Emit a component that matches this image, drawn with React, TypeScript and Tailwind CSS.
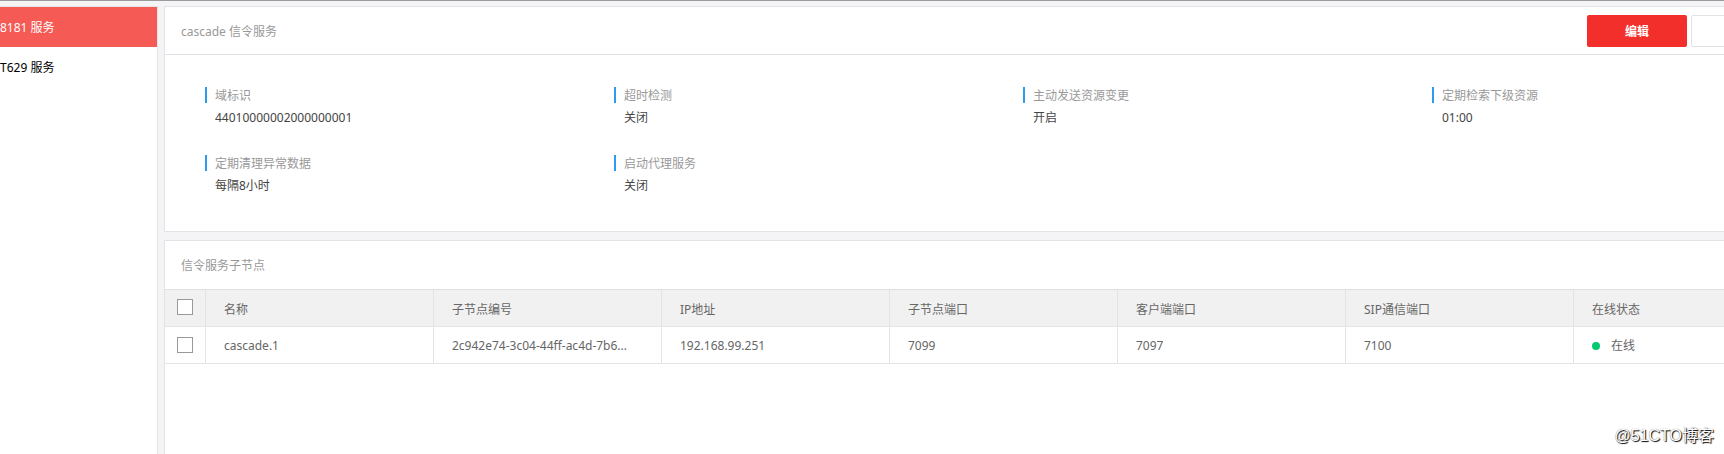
const services = ["8181 服务", "T629 服务"];

const details = [
  { label: "域标识", value: "44010000002000000001" },
  { label: "超时检测", value: "关闭" },
  { label: "主动发送资源变更", value: "开启" },
  { label: "定期检索下级资源", value: "01:00" },
  { label: "定期清理异常数据", value: "每隔8小时" },
  { label: "启动代理服务", value: "关闭" },
];

const columns = ["名称", "子节点编号", "IP地址", "子节点端口", "客户端端口", "SIP通信端口", "在线状态"];

const nodes = [
  {
    cells: ["cascade.1", "2c942e74-3c04-44ff-ac4d-7b6...", "192.168.99.251", "7099", "7097", "7100"],
    status: "在线",
  },
];

function Sidebar() {
  return (
    <nav className="mt-[5px] w-[158px] shrink-0 border-r border-t border-[#e4e5e8] bg-white">
      {services.map((name, i) => (
        <a
          key={name}
          href="#"
          className={
            i === 0
              ? "flex h-10 items-center bg-[#f55a55] pt-[2px] text-white"
              : "flex h-10 items-center pt-[2px] text-black"
          }
        >
          {name}
        </a>
      ))}
    </nav>
  );
}

function Tick({ label }: { label: string }) {
  return (
    <input
      type="checkbox"
      aria-label={label}
      className="mx-auto block size-4 appearance-none border border-[#999999] bg-white checked:bg-[#f32f2c]"
    />
  );
}

function Details() {
  return (
    <section className="border border-[#e2e3e6] bg-white">
      <header className="flex h-12 items-center border-b border-[#e2e3e6] pl-4 pr-[50px]">
        <h1 className="flex-1 pt-[2px] text-[#999999]">cascade 信令服务</h1>
        <div className="flex gap-1">
          <button type="button" className="h-8 w-[100px] rounded-xs bg-[#f32f2c] pt-[2px] font-bold text-white">
            编辑
          </button>
          <button
            type="button"
            aria-label="更多操作"
            className="h-8 w-[100px] rounded-xs border border-[#e2e3e6] bg-white"
          />
        </div>
      </header>
      <dl className="grid grid-cols-4 gap-y-6 pb-[35px] pl-10 pt-[29px]">
        {details.map((d) => (
          <div key={d.label}>
            <dt className="flex h-[22px] items-center gap-2 text-[#999999]">
              <span className="h-4 w-[2px] bg-[#2d9cee]" />
              <span className="pt-[2px]">{d.label}</span>
            </dt>
            <dd className="h-[22px] pl-[10px] leading-6 text-[#444444]">{d.value}</dd>
          </div>
        ))}
      </dl>
    </section>
  );
}

function Nodes() {
  return (
    <section className="flex-1 border border-b-0 border-[#e2e3e6] bg-white">
      <h2 className="flex h-12 items-center pl-4 pt-[2px] text-[#999999]">信令服务子节点</h2>
      <table className="w-full table-fixed border-separate border-spacing-0 border-t border-[#dfdfe1] text-left text-[#666666]">
        <colgroup>
          <col className="w-[41px]" />
          <col className="w-[228px]" />
          <col className="w-[228px]" />
          <col className="w-[228px]" />
          <col className="w-[228px]" />
          <col className="w-[228px]" />
          <col className="w-[228px]" />
          <col />
        </colgroup>
        <thead>
          <tr className="h-[37px] bg-[#f1f1f1]">
            <th className="border-b border-r border-[#e4e4e6] p-0 pb-[2px]">
              <Tick label="全选" />
            </th>
            {columns.map((c) => (
              <th key={c} className="border-b border-r border-[#e4e4e6] px-[18px] pb-0 pt-1 font-normal">
                {c}
              </th>
            ))}
          </tr>
        </thead>
        <tbody>
          {nodes.map((n) => (
            <tr key={n.cells[0]} className="h-[37px]">
              <td className="border-b border-r border-[#e4e4e6] p-0">
                <Tick label={n.cells[0]} />
              </td>
              {n.cells.map((c) => (
                <td key={c} className="truncate border-b border-r border-[#e4e4e6] px-[18px] pb-0 pt-[2px]">
                  {c}
                </td>
              ))}
              <td className="border-b border-r border-[#e4e4e6] px-[18px] pb-0 pt-[2px]">
                <span className="flex items-center gap-[11px]">
                  <span className="size-2 rounded-full bg-[#05c871]" />
                  {n.status}
                </span>
              </td>
            </tr>
          ))}
        </tbody>
      </table>
    </section>
  );
}

export default function App() {
  return (
    <div className="relative flex min-h-screen overflow-hidden border-t border-[#9b9b9f] bg-[#f4f4f6] font-['Noto_Sans','Noto_Sans_CJK_SC',sans-serif] text-xs">
      <Sidebar />
      <main className="-mr-[118px] ml-[6px] flex min-w-0 flex-1 flex-col gap-2 pt-[5px]">
        <Details />
        <Nodes />
      </main>
      <div className="absolute bottom-2 right-[10px] font-['Liberation_Sans','Noto_Sans_CJK_SC',sans-serif] text-base leading-5 text-white [text-shadow:1px_1px_1px_#000,0_0_1px_#666]">
        @51CTO博客
      </div>
    </div>
  );
}
